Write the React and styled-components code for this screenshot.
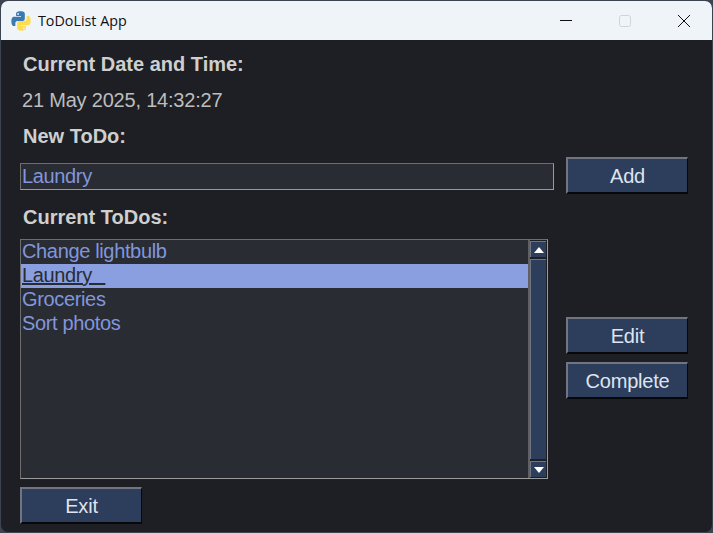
import React from "react";
import styled, { createGlobalStyle } from "styled-components";

const GlobalStyle = createGlobalStyle`
    html, body {
        margin: 0;
        padding: 0;
        width: 713px;
        height: 533px;
        overflow: hidden;
        background: #3d4451;
    }
    * {
        box-sizing: border-box;
    }
`;

const todos = ["Change lightbulb", "Laundry   ", "Groceries", "Sort photos"];

function PythonLogo() {
    return (
        <svg width="20" height="20" viewBox="0 0 110 110">
            <path
                fill="#3b7ab0"
                d="M54 2c-27 0-26 12-26 12v13h27v4H17S2 29 2 56s13 26 13 26h9V69s-1-14 13-14h26s13 0 13-12V17S78 2 54 2zM39 11a5 5 0 1 1 0 10 5 5 0 0 1 0-10z"
            />
            <path
                fill="#ffdc4e"
                d="M56 108c27 0 26-12 26-12V83H55v-4h38s15 2 15-25-13-26-13-26h-9v13s1 14-13 14H47s-13 0-13 12v26s-2 15 22 15zm15-9a5 5 0 1 1 0-10 5 5 0 0 1 0 10z"
            />
        </svg>
    );
}

export default function App() {
    return (
        <Window>
            <GlobalStyle />
            <TitleBar>
                <TitleLeft>
                    <PythonLogo />
                    <TitleText>ToDoList App</TitleText>
                </TitleLeft>
                <Controls>
                    <Control>
                        <svg width="14" height="14" viewBox="0 0 14 14">
                            <path d="M1 6.5h12" stroke="#111" fill="none" />
                        </svg>
                    </Control>
                    <Control>
                        <svg width="14" height="14" viewBox="0 0 14 14">
                            <rect x="1.5" y="1.5" width="11" height="11" rx="2" stroke="#d0d3d8" fill="none" />
                        </svg>
                    </Control>
                    <Control>
                        <svg width="14" height="14" viewBox="0 0 14 14">
                            <path d="M1 1l12 12M13 1L1 13" stroke="#111" fill="none" />
                        </svg>
                    </Control>
                </Controls>
            </TitleBar>
            <Content>
                <Label>Current Date and Time:</Label>
                <DateText>21 May 2025, 14:32:27</DateText>
                <Label>New ToDo:</Label>
                <EntryRow>
                    <Entry readOnly value="Laundry" />
                    <Button>Add</Button>
                </EntryRow>
                <ListLabel>Current ToDos:</ListLabel>
                <ListRow>
                    <ListBox>
                        <Items>
                            {todos.map((todo, i) => (
                                <Item key={todo} $selected={i === 1}>
                                    <span>{todo}</span>
                                </Item>
                            ))}
                        </Items>
                        <ScrollBar>
                            <Arrow>
                                <svg width="10" height="6" viewBox="0 0 10 6">
                                    <path d="M5 0l5 6H0z" fill="#fff" />
                                </svg>
                            </Arrow>
                            <Track />
                            <Arrow>
                                <svg width="10" height="6" viewBox="0 0 10 6">
                                    <path d="M0 0h10L5 6z" fill="#fff" />
                                </svg>
                            </Arrow>
                        </ScrollBar>
                    </ListBox>
                    <SideButtons>
                        <Button>Edit</Button>
                        <Button>Complete</Button>
                    </SideButtons>
                </ListRow>
                <Button>Exit</Button>
            </Content>
        </Window>
    );
}

const Window = styled.div`
    width: 713px;
    height: 533px;
    background: #1e1f24;
    border: 1px solid #3d4451;
    border-radius: 8px;
    overflow: hidden;
    display: flex;
    flex-direction: column;
    font-family: "Liberation Sans", Arial, sans-serif;
`;

const TitleBar = styled.div`
    height: 39px;
    background: #eff4f9;
    display: flex;
    align-items: center;
    justify-content: space-between;
    padding-left: 10px;
    flex-shrink: 0;
`;

const TitleLeft = styled.div`
    display: flex;
    align-items: center;
    gap: 7px;
`;

const TitleText = styled.span`
    font-family: "Open Sans", "Noto Sans", sans-serif;
    font-size: 14.3px;
    color: #111;
`;

const Controls = styled.div`
    display: flex;
    margin-right: -1px;
`;

const Control = styled.div`
    width: 59px;
    height: 39px;
    display: flex;
    align-items: center;
    justify-content: center;
`;

const Content = styled.div`
    flex: 1;
    display: flex;
    flex-direction: column;
    align-items: flex-start;
    padding: 13px 24px 0 19px;
`;

const Label = styled.div`
    font-size: 20px;
    font-weight: bold;
    line-height: 22px;
    color: #cfcfcf;
    padding-left: 3px;
`;

const DateText = styled.div`
    font-size: 20px;
    letter-spacing: -0.2px;
    line-height: 22px;
    color: #bdbdbd;
    padding-left: 2px;
    margin: 14px 0;
`;

const EntryRow = styled.div`
    width: 100%;
    display: flex;
    align-items: flex-start;
    justify-content: space-between;
    margin-top: 10px;
`;

const Entry = styled.input`
    width: 534px;
    height: 27px;
    margin-top: 6px;
    padding: 0 2px 0 1px;
    font-family: inherit;
    font-size: 20px;
    letter-spacing: -0.35px;
    color: #8196dc;
    background: #292c33;
    border: 1px solid #6d6d6d;
    border-right-color: #9a9a9a;
    border-bottom-color: #9a9a9a;
    outline: none;
`;

const Button = styled.button`
    width: 122px;
    height: 37px;
    padding: 1px 0 0;
    font-family: inherit;
    font-size: 20px;
    letter-spacing: -0.2px;
    color: #dfe4ee;
    background: #2d3d5c;
    border-top: 2px solid #70757f;
    border-left: 2px solid #70757f;
    border-right: 1px solid #08080a;
    border-bottom: 2px solid #08080a;
`;

const ListLabel = styled(Label)`
    margin-top: 12px;
`;

const ListRow = styled.div`
    width: 100%;
    display: flex;
    justify-content: space-between;
    margin: 11px 0 8px;
`;

const ListBox = styled.div`
    width: 528px;
    height: 240px;
    display: flex;
    background: #292c33;
    border: 1px solid #6d6d6d;
    border-right-color: #9a9a9a;
    border-bottom-color: #9a9a9a;
`;

const Items = styled.div`
    width: 509px;
    border-right: 2px solid #5e6066;
`;

const Item = styled.div`
    height: 24px;
    padding-left: 1px;
    font-size: 20px;
    letter-spacing: -0.35px;
    word-spacing: ${(props) => (props.$selected ? "-0.7px" : "0")};
    line-height: 22px;
    white-space: pre;
    color: ${(props) => (props.$selected ? "#292c33" : "#8196dc")};
    background: ${(props) => (props.$selected ? "#8a9fe0" : "transparent")};

    span {
        text-decoration: ${(props) => (props.$selected ? "underline" : "none")};
        text-decoration-thickness: 2px;
    }
`;

const ScrollBar = styled.div`
    flex: 1;
    display: flex;
    flex-direction: column;
    padding: 1px 1px 1px 0;
    background: #1e1f24;
`;

const Arrow = styled.div`
    height: 16px;
    display: flex;
    align-items: center;
    justify-content: center;
    background: #2d3d5c;
    border-top: 1px solid #70757f;
    border-left: 1px solid #70757f;
`;

const Track = styled.div`
    flex: 1;
    margin: 2px 0;
    background: #2d3d5c;
    border-top: 1px solid #70757f;
    border-left: 1px solid #70757f;
`;

const SideButtons = styled.div`
    display: flex;
    flex-direction: column;
    gap: 8px;
    margin-top: 78px;
`;
